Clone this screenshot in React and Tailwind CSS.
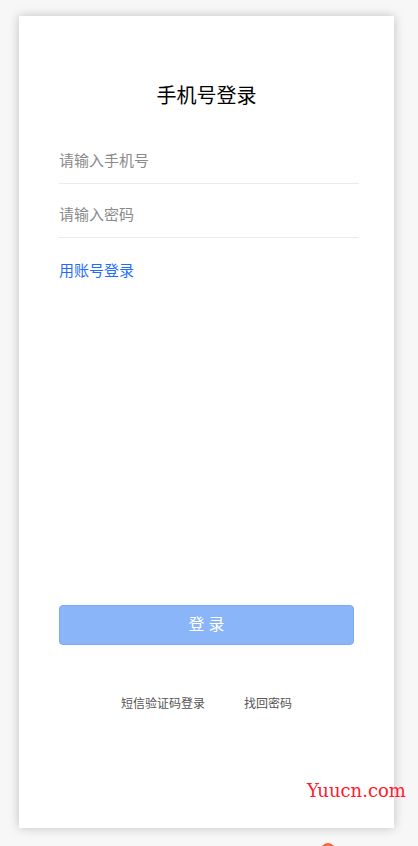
export default function App() {
  const font = { fontFamily: '"Noto Sans CJK SC", "Microsoft YaHei", sans-serif' };
  return (
    <div className="relative w-[418px] h-[846px] bg-[#f7f7f7] overflow-hidden pt-[16px]" style={font}>
      <div className="ml-[19px] w-[375px] h-[812px] bg-white shadow-[0_0_10px_rgba(0,0,0,0.22)] flex flex-col pl-[40px] pr-[35px]">
        <div className="pt-[65px] pr-[5px] text-center text-[20px] leading-[28px] text-black">手机号登录</div>
        <div className="mt-[21px] pt-[19px] pb-[12px] border-b border-[#ebebeb] text-[15px] leading-[22px] text-[#8a8a8a]">请输入手机号</div>
        <div className="pt-[19px] pb-[12px] border-b border-[#ebebeb] text-[15px] leading-[22px] text-[#8a8a8a]">请输入密码</div>
        <div className="mt-[21px] text-[15px] leading-[22px] text-[#1f6cff]">用账号登录</div>
        <div className="mt-[324px] w-[295px] h-[40px] rounded-[4px] bg-[#8bb5f9] border border-[#7ea8f0] flex items-center justify-center text-white text-[16px] tracking-[4px] pl-[4px] pb-[4px]">登录</div>
        <div className="mt-[49px] flex justify-center gap-[39px] text-[12px] leading-[17px] text-[#555] pr-[5px]">
          <span>短信验证码登录</span>
          <span>找回密码</span>
        </div>
      </div>
      <div className="absolute left-[307px] top-[779px] text-[18px] leading-[24px] text-[#ff1a2e]" style={{ fontFamily: '"DejaVu Serif", serif' }}>Yuucn.com</div>
      <div className="absolute left-[321px] top-[843px] w-[14px] h-[8px] rounded-t-full bg-[#f26b3a]" />
    </div>
  );
}
